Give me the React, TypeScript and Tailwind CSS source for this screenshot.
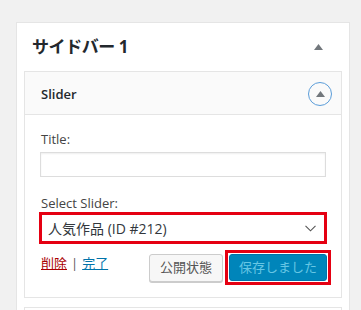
import React from 'react';

const jp = "font-['Open_Sans','Noto_Sans_CJK_JP',sans-serif]";

function UpTriangle({ className }: { className?: string }) {
  return (
    <svg width="9" height="6" viewBox="0 0 9 6" className={className}>
      <path d="M4.5 0 L9 6 L0 6 Z" fill="currentColor" />
    </svg>
  );
}

export default function App() {
  return (
    <div className={`w-[361px] h-[310px] bg-[#f1f1f1] overflow-hidden pt-[22px] pl-4 text-[#32373c] ${jp}`}>
      {/* Sidebar panel */}
      <div className="w-[334px] h-[300px] bg-white border border-[#e5e5e5] px-[7px]">
        <div className="h-[48px] flex items-center justify-between pl-[8px] pr-[19px]">
          <h2 className="text-[17px] font-bold text-[#23282d] tracking-tight">サイドバー 1</h2>
          <UpTriangle className="text-[#72777c]" />
        </div>

        {/* Widget */}
        <div className="border border-[#e5e5e5]">
          <div className="h-[43px] bg-[#fafafa] border-b border-[#e5e5e5] flex items-center justify-between pl-4 pr-[9px]">
            <span className="text-[13px] font-semibold text-[#23282d] pt-[3px]">Slider</span>
            <div className="w-[24px] h-[24px] rounded-full border border-[#5b9dd9] flex items-center justify-center mt-[2px]">
              <UpTriangle className="text-[#72777c] -mt-px" />
            </div>
          </div>

          <div className="px-[15px] pt-[16px] pb-[12px]">
            <label className="block text-[13px] leading-[16px] text-[#444] pl-px">Title:</label>
            <div className="mt-[5px] h-[25px] border border-[#ddd] shadow-[inset_0_1px_2px_rgba(0,0,0,0.07)]" />

            <label className="block mt-[18px] text-[13px] leading-[16px] text-[#444] pl-px">Select Slider:</label>
            <div className="mt-[1px] -mx-px h-[32px] border-[3px] border-[#e50012] bg-white flex items-center justify-between pl-[6px] pr-[8px]">
              <span className="text-[14px] text-[#32373c]">人気作品 (ID #212)</span>
              <svg width="11" height="7" viewBox="0 0 11 7">
                <path d="M0.5 0.8 L5.5 5.8 L10.5 0.8" fill="none" stroke="#555" strokeWidth="1.1" />
              </svg>
            </div>

            <div className="mt-[6px] flex items-center justify-between">
              <div className="text-[13px] pl-px -mt-[7px]">
                <a className="text-[#a00] underline">削除</a>
                <span className="text-[#555] px-[4px]">|</span>
                <a className="text-[#0073aa] underline">完了</a>
              </div>
              <div className="flex items-center gap-[2px] -mr-[5px]">
                <button className="h-[28px] w-[74px] rounded-[3px] border border-[#ccc] bg-[#f7f7f7] shadow-[0_1px_0_#ccc] text-[13px] text-[#555]">
                  公開状態
                </button>
                <div className="border-[3px] border-[#e50012] p-px bg-white">
                  <button className="h-[27px] w-[98px] rounded-[3px] bg-[#0085ba] border border-[#0073aa] text-[13px] text-[#66c6e4]">
                    保存しました
                  </button>
                </div>
              </div>
            </div>
          </div>
        </div>

        <div className="mt-[9px] h-[20px] border border-[#e5e5e5]" />
      </div>
    </div>
  );
}
